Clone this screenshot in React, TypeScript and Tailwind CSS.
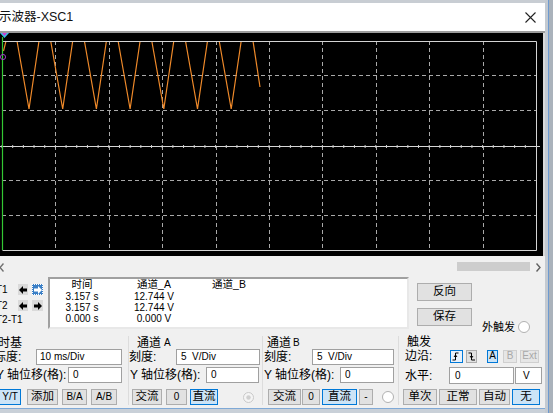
import React from "react";

function Scope() {
  const xs = Array.from({ length: 9 }, (_, i) => Math.round(2 + 53.4 * (i + 1)) + 0.5);
  const ys = [42.5, 77.5, 147.5, 182.5];
  const valleys = Array.from({ length: 7 }, (_, k) => 29 + 33.7 * k);
  const ticks = Array.from({ length: 50 }, (_, i) => 2 + i * 10.68);
  return (
    <svg width={543} height={223} className="block shrink-0">
      <rect width="543" height="223" fill="#000" />
      {xs.map((x) => (
        <line key={x} x1={x} x2={x} y1={8} y2={217} stroke="#a9a9a9" strokeWidth="1" strokeDasharray="4 3" />
      ))}
      {ys.map((y) => (
        <line key={y} x1={2} x2={536} y1={y} y2={y} stroke="#a9a9a9" strokeWidth="1" strokeDasharray="4 3" />
      ))}
      <line x1={0} x2={540} y1={113.5} y2={113.5} stroke="#d6d6d6" strokeWidth="1" />
      {ticks.map((x) => (
        <line key={x} x1={x} x2={x} y1={112} y2={115} stroke="#cfcfcf" strokeWidth="1" />
      ))}
      {valleys.map((v) => (
        <polyline key={v} points={`${v - 12},8 ${v},76 ${v + 10},8`} fill="none" stroke="#f08a2a" strokeWidth="1.2" />
      ))}
      <polyline points="253,8 260,54" fill="none" stroke="#f08a2a" strokeWidth="1.2" />
      <polyline points="3.5,18 6,8" fill="none" stroke="#f08a2a" strokeWidth="1.2" />
      <polyline points="2.5,8.5 536.5,8.5 536.5,217.5 2.5,217.5" fill="none" stroke="#d4d4d4" strokeWidth="1" />
      <line x1={2.5} x2={2.5} y1={4} y2={217} stroke="#33c833" strokeWidth="1.2" />
      <polygon points="0,0 9,0 4.5,5" fill="#38c6e6" />
      <polygon points="2,0 7,0 4.5,3" fill="#d03cd0" />
      <circle cx={3} cy={24} r={2.6} fill="none" stroke="#9a40c0" strokeWidth="1" />
    </svg>
  );
}

function Arrow({ dir, color }: { dir: "l" | "r"; color: string }) {
  return (
    <svg width="8" height="8" viewBox="0 0 8 8">
      {dir === "l" ? (
        <polygon points="0,4 4,0 4,2.6 8,2.6 8,5.4 4,5.4 4,8" fill={color} />
      ) : (
        <polygon points="8,4 4,0 4,2.6 0,2.6 0,5.4 4,5.4 4,8" fill={color} />
      )}
    </svg>
  );
}

function Radio({ disabled }: { disabled?: boolean }) {
  return disabled ? (
    <svg width="11" height="11" viewBox="0 0 11 11">
      <circle cx="5.5" cy="5.5" r="5" fill="#f4f4f4" stroke="#c8c8c8" />
      <circle cx="5.5" cy="5.5" r="2.2" fill="#cfcfcf" />
    </svg>
  ) : (
    <svg width="12" height="12" viewBox="0 0 12 12">
      <circle cx="6" cy="6" r="5.5" fill="#ffffff" stroke="#b0b0b0" />
    </svg>
  );
}

export default function App() {
  return (
    <div className="relative flex w-[553px] h-[413px] overflow-hidden bg-[#b8c0c9] font-['Liberation_Sans','Noto_Sans_CJK_SC',sans-serif] text-black">
      <div className="flex w-[545px] flex-col">
        <div className="h-[3px] bg-[#c8cdd3]" />
        <div className="flex h-[28px] items-center justify-between bg-white">
          <span className="-ml-[1px] text-[12.5px] leading-none text-[#111]">示波器-XSC1</span>
          <svg width="11" height="11" viewBox="0 0 11 11" className="mr-[9px]">
            <path d="M0.5 0.5 L10.5 10.5 M10.5 0.5 L0.5 10.5" stroke="#222" strokeWidth="1.1" />
          </svg>
        </div>
        <div className="h-[2px] bg-[#9c9c9c]" />
        <div className="flex h-[223px] bg-[#dadada]">
          <Scope />
        </div>
        <div className="flex h-[19px] items-start bg-[#f0f0f0] pt-[6px]">
          <svg width="4" height="9" viewBox="0 0 4 9" className="mt-[1px]">
            <path d="M3.5 0.5 L0 4.5 L3.5 8.5" fill="none" stroke="#707070" strokeWidth="1.4" />
          </svg>
          <div className="ml-[453px] h-[9px] w-[73px] bg-[#cdcdcd]" />
          <svg width="5" height="9" viewBox="0 0 5 9" className="ml-[6px] mt-[1px]">
            <path d="M0.5 0.5 L4 4.5 L0.5 8.5" fill="none" stroke="#606060" strokeWidth="1.4" />
          </svg>
        </div>

        {/* cursor area */}
        <div className="flex h-[58px] items-start bg-[#f0f0f0]">
          <div className="-ml-[4px] flex w-[52px] flex-col text-[10px] leading-none">
            <div className="mt-[9px] flex h-[11px] items-center">
              <span className="w-[22px]">T1</span>
              <div className="flex h-[11px] w-[10px] items-center justify-center bg-[#dadada]">
                <Arrow dir="l" color="#000" />
              </div>
              <div className="ml-[4px] flex h-[11px] w-[11px] items-center justify-center border border-dotted border-white bg-[#3a7fc6]">
                <Arrow dir="r" color="#fff" />
              </div>
            </div>
            <div className="mt-[5px] flex h-[11px] items-center">
              <span className="w-[22px]">T2</span>
              <div className="flex h-[11px] w-[10px] items-center justify-center bg-[#dadada]">
                <Arrow dir="l" color="#000" />
              </div>
              <div className="ml-[4px] flex h-[11px] w-[11px] items-center justify-center bg-[#dadada]">
                <Arrow dir="r" color="#000" />
              </div>
            </div>
            <div className="mt-[3px] flex h-[12px] items-center">T2-T1</div>
          </div>
          <div className="mt-[2px] grid h-[52px] w-[361px] grid-cols-[64px_80px_70px] content-start border-2 border-t-[#a0a0a0] border-l-[#a0a0a0] border-r-[#e8e8e8] border-b-[#e8e8e8] bg-white text-[10px] leading-[11px]">
            <div className="text-center text-[10.5px]">时间</div>
            <div className="text-center text-[10.5px]">通道_A</div>
            <div className="text-center text-[10.5px]">通道_B</div>
            <div className="mt-[1px] text-center">3.157 s</div>
            <div className="mt-[1px] text-center">12.744 V</div>
            <div />
            <div className="text-center">3.157 s</div>
            <div className="text-center">12.744 V</div>
            <div />
            <div className="text-center">0.000 s</div>
            <div className="text-center">0.000 V</div>
            <div />
          </div>
          <div className="ml-[8px] flex flex-col">
            <div className="mt-[8px] flex h-[18px] w-[55px] items-center justify-center border border-[#adadad] bg-[#e1e1e1] text-[11.5px] leading-none">反向</div>
            <div className="mt-[7px] flex items-start">
              <div className="flex h-[18px] w-[55px] items-center justify-center border border-[#adadad] bg-[#e1e1e1] text-[11.5px] leading-none">保存</div>
              <div className="ml-[10px] mt-[13px] flex h-[12px] items-center text-[11px] leading-none">
                外触发
                <span className="ml-[3px] flex">
                  <Radio />
                </span>
              </div>
            </div>
          </div>
        </div>

        {/* controls */}
        <div className="flex h-[75px] bg-[#f0f0f0] text-[12px] leading-none">
          {/* 时基 */}
          <div className="mt-[3px] flex w-[128px] flex-col">
            <div className="-ml-[2px] flex h-[13px] items-center">时基</div>
            <div className="flex h-[16px] items-center">
              <div className="-ml-[6px] w-[42px]">标度:</div>
              <div className="flex h-[16px] w-[86px] items-center border border-[#a0a0a0] bg-white pl-[3px] text-[10px]">10 ms/Div</div>
            </div>
            <div className="mt-[2px] flex h-[16px] items-center">
              <div className="-ml-[4px] w-[72px]">Y 轴位移(格):</div>
              <div className="flex h-[16px] w-[54px] items-center border border-[#a0a0a0] bg-white pl-[4px] text-[10px]">0</div>
            </div>
            <div className="mt-[6px] flex h-[16px] items-center text-[10px]">
              <div className="-ml-[6px] flex h-[16px] w-[27px] items-center justify-center border border-[#0078d7] bg-[#cce4f7] pl-[5px]">Y/T</div>
              <div className="ml-[6px] flex h-[16px] w-[31px] items-center justify-center border border-[#adadad] bg-[#e1e1e1] text-[11.5px]">添加</div>
              <div className="ml-[4px] flex h-[16px] w-[25px] items-center justify-center border border-[#adadad] bg-[#e1e1e1]">B/A</div>
              <div className="ml-[4px] flex h-[16px] w-[26px] items-center justify-center border border-[#adadad] bg-[#e1e1e1]">A/B</div>
            </div>
          </div>
          {/* 通道A */}
          <div className="mt-[3px] mb-[3px] flex w-[134px] flex-col border-l border-[#dcdcdc]">
            <div className="ml-[8px] flex h-[13px] items-center">
              通道<span className="ml-[3px] text-[10px]">A</span>
            </div>
            <div className="flex h-[16px] items-center">
              <div className="w-[47px]">刻度:</div>
              <div className="flex h-[16px] w-[84px] items-center border border-[#a0a0a0] bg-white pl-[4px] text-[10px]">5&nbsp;&nbsp;V/Div</div>
            </div>
            <div className="mt-[2px] flex h-[16px] items-center">
              <div className="ml-[1px] w-[76px]">Y 轴位移(格):</div>
              <div className="flex h-[16px] w-[53px] items-center border border-[#a0a0a0] bg-white pl-[4px] text-[10px]">0</div>
            </div>
            <div className="mt-[6px] flex h-[16px] items-center text-[10px]">
              <div className="ml-[3px] flex h-[16px] w-[30px] items-center justify-center border border-[#adadad] bg-[#e1e1e1] text-[11.5px]">交流</div>
              <div className="ml-[4px] flex h-[16px] w-[21px] items-center justify-center border border-[#adadad] bg-[#e1e1e1]">0</div>
              <div className="ml-[3px] flex h-[16px] w-[28px] items-center justify-center border border-[#0078d7] bg-[#cce4f7] text-[11.5px]">直流</div>
              <div className="ml-[25px] flex">
                <Radio disabled />
              </div>
            </div>
          </div>
          {/* 通道B */}
          <div className="mt-[3px] mb-[3px] flex w-[136px] flex-col border-l border-[#dcdcdc]">
            <div className="ml-[4px] flex h-[13px] items-center">
              通道<span className="ml-[2px] text-[10px]">B</span>
            </div>
            <div className="flex h-[16px] items-center">
              <div className="ml-[1px] w-[48px]">刻度:</div>
              <div className="flex h-[16px] w-[82px] items-center border border-[#a0a0a0] bg-white pl-[4px] text-[10px]">5&nbsp;&nbsp;V/Div</div>
            </div>
            <div className="mt-[2px] flex h-[16px] items-center">
              <div className="ml-[1px] w-[76px]">Y 轴位移(格):</div>
              <div className="flex h-[16px] w-[54px] items-center border border-[#a0a0a0] bg-white pl-[4px] text-[10px]">0</div>
            </div>
            <div className="mt-[6px] flex h-[16px] items-center text-[10px]">
              <div className="ml-[5px] flex h-[16px] w-[33px] items-center justify-center border border-[#adadad] bg-[#e1e1e1] text-[11.5px]">交流</div>
              <div className="ml-[1px] flex h-[16px] w-[18px] items-center justify-center border border-[#adadad] bg-[#e1e1e1]">0</div>
              <div className="ml-[2px] flex h-[16px] w-[35px] items-center justify-center border border-[#0078d7] bg-[#cce4f7] text-[11.5px]">直流</div>
              <div className="ml-[2px] flex h-[16px] w-[14px] items-center justify-center border border-[#adadad] bg-[#e1e1e1]">-</div>
              <div className="ml-[9px] flex">
                <Radio />
              </div>
            </div>
          </div>
          {/* 触发 */}
          <div className="mt-[3px] mb-[3px] flex w-[147px] flex-col border-l border-[#dcdcdc]">
            <div className="ml-[8px] flex h-[13px] items-center">触发</div>
            <div className="flex h-[16px] items-center text-[10px]">
              <div className="ml-[6px] w-[45px] text-[12px]">边沿:</div>
              <div className="flex h-[13px] w-[13px] items-center justify-center border border-[#0078d7] bg-[#e8f1fb]">
                <svg width="9" height="9" viewBox="0 0 9 9">
                  <path d="M0.5 8 H3.5 V1 H6.5" fill="none" stroke="#000" strokeWidth="1" />
                  <path d="M2 5 L3.5 3 L5 5" fill="none" stroke="#000" strokeWidth="1" />
                </svg>
              </div>
              <div className="ml-[3px] flex h-[13px] w-[11px] items-center justify-center border border-[#adadad] bg-[#e1e1e1]">
                <svg width="8" height="9" viewBox="0 0 8 9">
                  <path d="M0.5 1 H3.5 V8 H7" fill="none" stroke="#000" strokeWidth="1" />
                  <path d="M2 4 L3.5 6 L5 4" fill="none" stroke="#000" strokeWidth="1" />
                </svg>
              </div>
              <div className="ml-[10px] flex h-[13px] w-[11px] items-center justify-center border border-[#0078d7] bg-[#cce4f7]">A</div>
              <div className="ml-[5px] flex h-[13px] w-[14px] items-center justify-center border border-[#cfcfcf] bg-[#e6e6e6] text-[#a8a8a8]">B</div>
              <div className="ml-[3px] flex h-[13px] w-[19px] items-center justify-center border border-[#cfcfcf] bg-[#e6e6e6] text-[#a8a8a8]">Ext</div>
            </div>
            <div className="mt-[3px] flex h-[17px] items-center">
              <div className="ml-[6px] w-[44px]">水平:</div>
              <div className="flex h-[17px] w-[65px] items-end border border-[#a0a0a0] bg-white pb-[2px] pl-[5px] text-[10px]">0</div>
              <div className="ml-[1px] flex h-[17px] w-[27px] items-center border border-[#a0a0a0] bg-white pl-[7px] text-[10px]">V</div>
            </div>
            <div className="mt-[5px] flex h-[16px] items-center text-[11.5px]">
              <div className="ml-[4px] flex h-[16px] w-[34px] items-center justify-center border border-[#adadad] bg-[#e1e1e1]">单次</div>
              <div className="ml-[2px] flex h-[16px] w-[38px] items-center justify-center border border-[#adadad] bg-[#e1e1e1]">正常</div>
              <div className="ml-[2px] flex h-[16px] w-[31px] items-center justify-center border border-[#adadad] bg-[#e1e1e1]">自动</div>
              <div className="ml-[2px] flex h-[16px] w-[28px] items-center justify-center border border-[#0078d7] bg-[#cce4f7]">无</div>
            </div>
          </div>
        </div>
        <div className="h-[1px] bg-[#7fa9d6]" />
        <div className="flex-1 bg-[#c9d0d8]" />
      </div>
      <div className="flex flex-1">
        <div className="w-[3px] bg-[#c4cad1]" />
        <div className="w-[1px] bg-[#6d9ad0]" />
        <div className="flex-1 bg-[#aab2bb]" />
      </div>
    </div>
  );
}
